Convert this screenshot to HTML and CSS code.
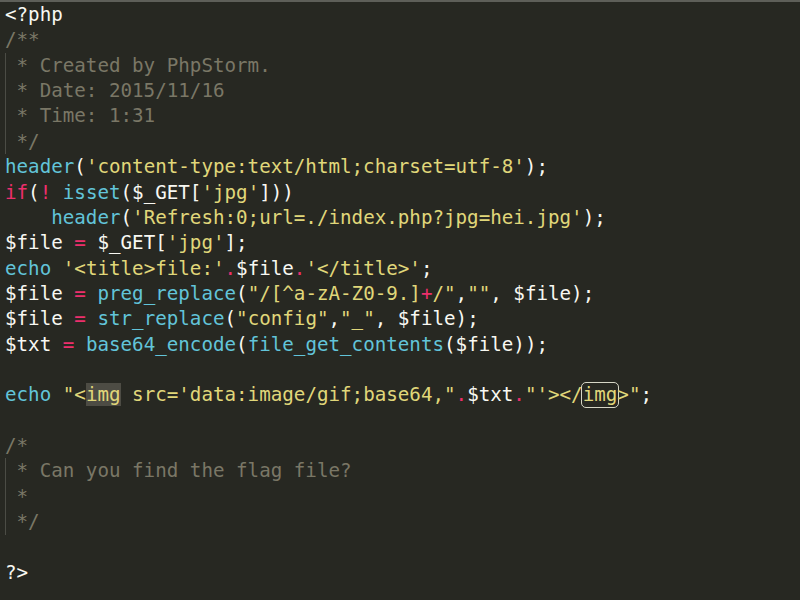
FILE: index.html
```html
<!DOCTYPE html>
<html lang="en">
<head>
<meta charset="utf-8">
<title>index.php</title>
<link rel="stylesheet" href="styles.css">
</head>
<body>
<div class="editor">
<div class="ln"><span class="tx">&lt;?php</span></div>
<div class="ln"><span class="cm">/**</span></div>
<div class="ln guide"><span class="cm"> * Created by PhpStorm.</span></div>
<div class="ln guide"><span class="cm"> * Date: 2015/11/16</span></div>
<div class="ln guide"><span class="cm"> * Time: 1:31</span></div>
<div class="ln guide"><span class="cm"> */</span></div>
<div class="ln"><span class="fn">header</span>(<span class="st">'content-type:text/html;charset=utf-8'</span>);</div>
<div class="ln"><span class="kw">if</span>(<span class="kw">!</span> <span class="fn">isset</span>($_GET[<span class="st">'jpg'</span>]))</div>
<div class="ln">    <span class="fn">header</span>(<span class="st">'Refresh:0;url=./index.php?jpg=hei.jpg'</span>);</div>
<div class="ln">$file <span class="kw">=</span> $_GET[<span class="st">'jpg'</span>];</div>
<div class="ln"><span class="fn">echo</span> <span class="st">'&lt;title&gt;file:'</span><span class="kw">.</span>$file<span class="kw">.</span><span class="st">'&lt;/title&gt;'</span>;</div>
<div class="ln">$file <span class="kw">=</span> <span class="fn">preg_replace</span>(<span class="st">"/[^a-zA-Z0-9.]</span><span class="kw">+</span><span class="st">/"</span>,<span class="st">""</span>, $file);</div>
<div class="ln">$file <span class="kw">=</span> <span class="fn">str_replace</span>(<span class="st">"config"</span>,<span class="st">"_"</span>, $file);</div>
<div class="ln">$txt <span class="kw">=</span> <span class="fn">base64_encode</span>(<span class="fn">file_get_contents</span>($file));</div>
<div class="ln"> </div>
<div class="ln"><span class="fn">echo</span> <span class="st">"&lt;<span class="sel">img</span> src='data:image/gif;base64,"</span><span class="kw">.</span>$txt<span class="kw">.</span><span class="st">"'&gt;&lt;/<span class="match">img</span>&gt;"</span>;</div>
<div class="ln"> </div>
<div class="ln"><span class="cm">/*</span></div>
<div class="ln guide"><span class="cm"> * Can you find the flag file?</span></div>
<div class="ln guide"><span class="cm"> *</span></div>
<div class="ln guide"><span class="cm"> */</span></div>
<div class="ln"> </div>
<div class="ln"><span class="tx">?&gt;</span></div>
</div>
</body>
</html>
```

FILE: styles.css
```css
html, body {
  margin: 0;
  padding: 0;
  background: #272822;
}

.editor {
  width: 800px;
  height: 598px;
  overflow: hidden;
  border-top: 2px solid #5e5f59;
  background: #272822;
  color: #f8f8f2;
  font-family: "DejaVu Sans Mono", "Liberation Mono", monospace;
  font-size: 19.2px;
  line-height: 25.36px;
  padding-left: 5px;
}

.ln {
  white-space: pre;
  height: 25.36px;
}

.guide {
  background: linear-gradient(#4b4c45, #4b4c45) no-repeat 0 0 / 1px 100%;
}

.tx { color: #f8f8f2; }
.cm { color: #7a7766; }
.kw { color: #ec2f6c; }
.fn { color: #62c4d9; }
.st { color: #e0d77a; }

.sel {
  background: #4d4c44;
}

.match {
  display: inline-block;
  line-height: 22px;
  border-radius: 3px;
  outline: 1px solid #d6d6c6;
  outline-offset: 1px;
}
```
